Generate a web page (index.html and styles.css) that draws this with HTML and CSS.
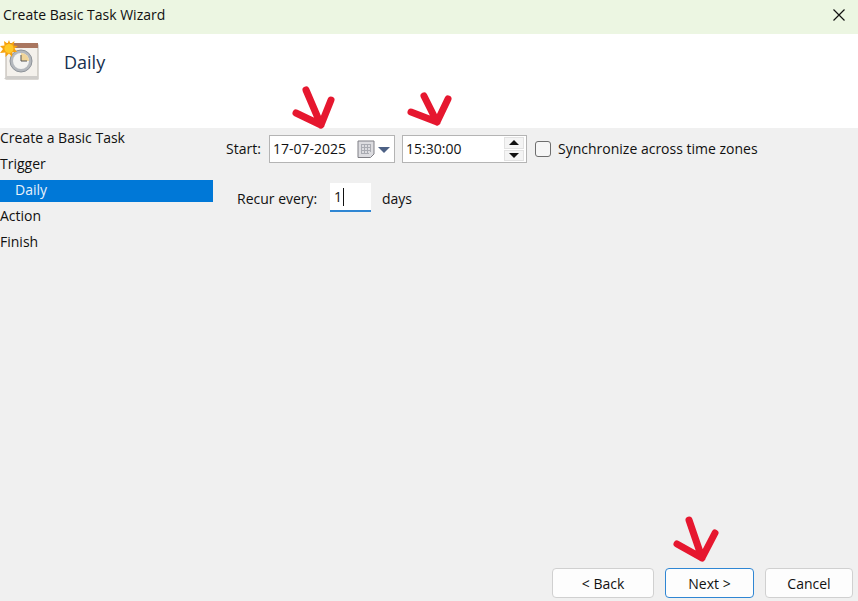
FILE: index.html
```html
<!DOCTYPE html>
<html lang="en">
<head>
    <meta charset="UTF-8">
    <title>Create Basic Task Wizard</title>
    <link rel="stylesheet" href="styles.css">
</head>
<body>
<div class="window">
    <div class="titlebar">
        <span class="title">Create Basic Task Wizard</span>
        <svg class="close" width="14" height="14" viewBox="0 0 14 14">
            <path d="M1.5 1.5L12.5 12.5M12.5 1.5L1.5 12.5" stroke="#111" stroke-width="1.2" fill="none"/>
        </svg>
    </div>
    <div class="header">
        <svg class="task-icon" width="40" height="42" viewBox="0 0 40 42">
            <rect x="6" y="6" width="32" height="34" fill="#f4f1ec" stroke="#b5b0a8"/>
            <rect x="6" y="4" width="32" height="5" fill="#a9765f"/>
            <path d="M4 40H38V37H7Z" fill="#cfcdca"/>
            <circle cx="21" cy="22" r="11" fill="#b4b8bd" stroke="#8f949a"/>
            <circle cx="21" cy="22" r="8" fill="#f3f3f1"/>
            <path d="M21 22V14A8 8 0 0 1 29 22Z" fill="#f0d59a"/>
            <path d="M21 16V22H27" fill="none" stroke="#555" stroke-width="1"/>
            <path d="M9 1L10.500 5L14.500 2L13.500 6.500L18 7L14.500 9.500L17 13L12.500 13L12 18L9 14.500L5.500 18L5.500 13.500L0 14L3 10L0 7L4.500 6.500L4 2L7.500 4.500Z" fill="#f7a30e"/>
            <circle cx="9" cy="9.500" r="4.500" fill="#ffc928"/>
        </svg>
        <span class="header-text">Daily</span>
    </div>
    <div class="main">
        <ul class="steps">
            <li>Create a Basic Task</li>
            <li>Trigger</li>
            <li class="sub active">Daily</li>
            <li>Action</li>
            <li>Finish</li>
        </ul>
        <div class="form">
            <div class="start-row">
                <span class="start-label">Start:</span>
                <div class="box date-box">
                    <span class="box-text">17-07-2025</span>
                    <svg class="cal" width="18" height="18" viewBox="0 0 18 18">
                        <path d="M1 1H17V14L13.500 17.500H1Z" fill="#dcdce0" stroke="#7f7f85"/>
                        <path d="M4 4.500H14M4 7.500H14M4 10.500H14M4 13.500H12M4.500 4V14M7.500 4V14M10.500 4V14M13.500 4V12" stroke="#a9abb2" stroke-width="1"/>
                    </svg>
                    <span class="drop"></span>
                </div>
                <div class="box time-box">
                    <span class="box-text">15:30:00</span>
                    <div class="spin">
                        <span class="spin-btn"><i class="tri-up"></i></span>
                        <span class="spin-btn"><i class="tri-down"></i></span>
                    </div>
                </div>
                <span class="check"></span>
                <span class="check-label">Synchronize across time zones</span>
            </div>
            <div class="recur-row">
                <span class="recur-label">Recur every:</span>
                <div class="recur-input"><span>1</span><i class="caret"></i></div>
                <span class="recur-unit">days</span>
            </div>
        </div>
    </div>
    <div class="footer">
        <button class="btn btn-back">&lt; Back</button>
        <button class="btn btn-next">Next &gt;</button>
        <button class="btn btn-cancel">Cancel</button>
    </div>

    <svg class="arrows" width="858" height="601" viewBox="0 0 858 601">
        <g fill="none" stroke="#e6172f" stroke-width="7" stroke-linecap="round" stroke-linejoin="round">
            <path d="M306 90L321 125M296 113L321 125L331 100"/>
            <path d="M424 96L437 122M411 112L437 122L448 99"/>
            <path d="M689 520L702 558M677 544L702 558L715 533"/>
        </g>
    </svg>
</div>
</body>
</html>
```

FILE: styles.css
```css
html, body {
    margin: 0;
    padding: 0;
}
body {
    font-family: "Open Sans", "Noto Sans", sans-serif;
    font-size: 14px;
    color: #111;
}
.window {
    position: relative;
    width: 858px;
    height: 601px;
    display: flex;
    flex-direction: column;
    background: #f0f0f0;
    overflow: hidden;
}
.titlebar {
    height: 34px;
    flex: none;
    display: flex;
    align-items: center;
    justify-content: space-between;
    padding: 0 12px 4px 3px;
    box-sizing: border-box;
    background: #ecf6e2;
}
.title {
    padding-bottom: 2px;
}
.header {
    height: 94px;
    flex: none;
    display: flex;
    align-items: flex-start;
    background: #fff;
}
.task-icon {
    flex: none;
    margin-top: 5px;
}
.header-text {
    margin: 15px 0 0 24px;
    font-size: 18px;
    line-height: 26px;
    color: #16304f;
}
.main {
    flex: 1;
    display: flex;
}
.steps {
    list-style: none;
    margin: 0;
    padding: 0;
    width: 213px;
    flex: none;
}
.steps li {
    height: 22px;
    line-height: 20px;
    margin-bottom: 4px;
}
.steps .sub {
    padding-left: 15px;
}
.steps .active {
    background: #0078d7;
    color: #e8f2fb;
}
.form {
    flex: 1;
    padding: 7px 0 0 13px;
}
.start-row {
    display: flex;
    align-items: center;
    height: 28px;
}
.start-label, .check-label, .box-text {
    padding-bottom: 2px;
}
.start-label {
    width: 43px;
    flex: none;
}
.box {
    height: 28px;
    box-sizing: border-box;
    display: flex;
    align-items: center;
    background: #fff;
    border: 1px solid #b4b4b4;
    padding-left: 3px;
}
.box-text {
    flex: 1;
}
.date-box {
    width: 126px;
    margin-right: 7px;
    padding-right: 4px;
}
.cal {
    flex: none;
    margin-right: 3px;
}
.drop {
    width: 0;
    height: 0;
    border-left: 6px solid transparent;
    border-right: 6px solid transparent;
    border-top: 6px solid #4d6185;
    margin-top: 1px;
}
.time-box {
    width: 125px;
    margin-right: 8px;
    padding-right: 2px;
}
.spin {
    width: 20px;
    height: 24px;
    display: flex;
    flex-direction: column;
    gap: 1px;
}
.spin-btn {
    flex: 1;
    display: flex;
    align-items: center;
    justify-content: center;
    background: #f4f4f4;
    border: 1px solid #e2e2e2;
}
.tri-up {
    border-left: 5px solid transparent;
    border-right: 5px solid transparent;
    border-bottom: 5px solid #111;
}
.tri-down {
    border-left: 5px solid transparent;
    border-right: 5px solid transparent;
    border-top: 5px solid #111;
}
.check {
    width: 16px;
    height: 16px;
    box-sizing: border-box;
    border: 1px solid #6e6e6e;
    border-radius: 3px;
    background: #f6f6f6;
    margin-right: 7px;
    flex: none;
}
.recur-row {
    display: flex;
    align-items: center;
    height: 29px;
    margin-top: 20px;
    padding-left: 11px;
}
.recur-label {
    width: 93px;
    flex: none;
    padding-top: 2px;
}
.recur-input {
    width: 41px;
    height: 29px;
    box-sizing: border-box;
    flex: none;
    display: flex;
    align-items: center;
    padding-left: 4px;
    background: #fff;
    border-bottom: 2px solid #2f86d3;
}
.caret {
    width: 1px;
    height: 18px;
    margin-left: 1px;
    background: #111;
}
.recur-unit {
    margin-left: 11px;
    padding-top: 2px;
}
.footer {
    flex: none;
    display: flex;
    justify-content: flex-end;
    gap: 11px;
    padding: 0 5px 3px 0;
}
.btn {
    height: 30px;
    box-sizing: border-box;
    font: inherit;
    color: #111;
    background: #fdfdfd;
    border: 1px solid #d0d0d0;
    border-radius: 4px;
    padding: 0;
}
.btn-back {
    width: 102px;
}
.btn-next {
    width: 89px;
    border: 1.500px solid #2f86d3;
}
.btn-cancel {
    width: 88px;
}
.arrows {
    position: absolute;
    left: 0;
    top: 0;
    pointer-events: none;
}
```
